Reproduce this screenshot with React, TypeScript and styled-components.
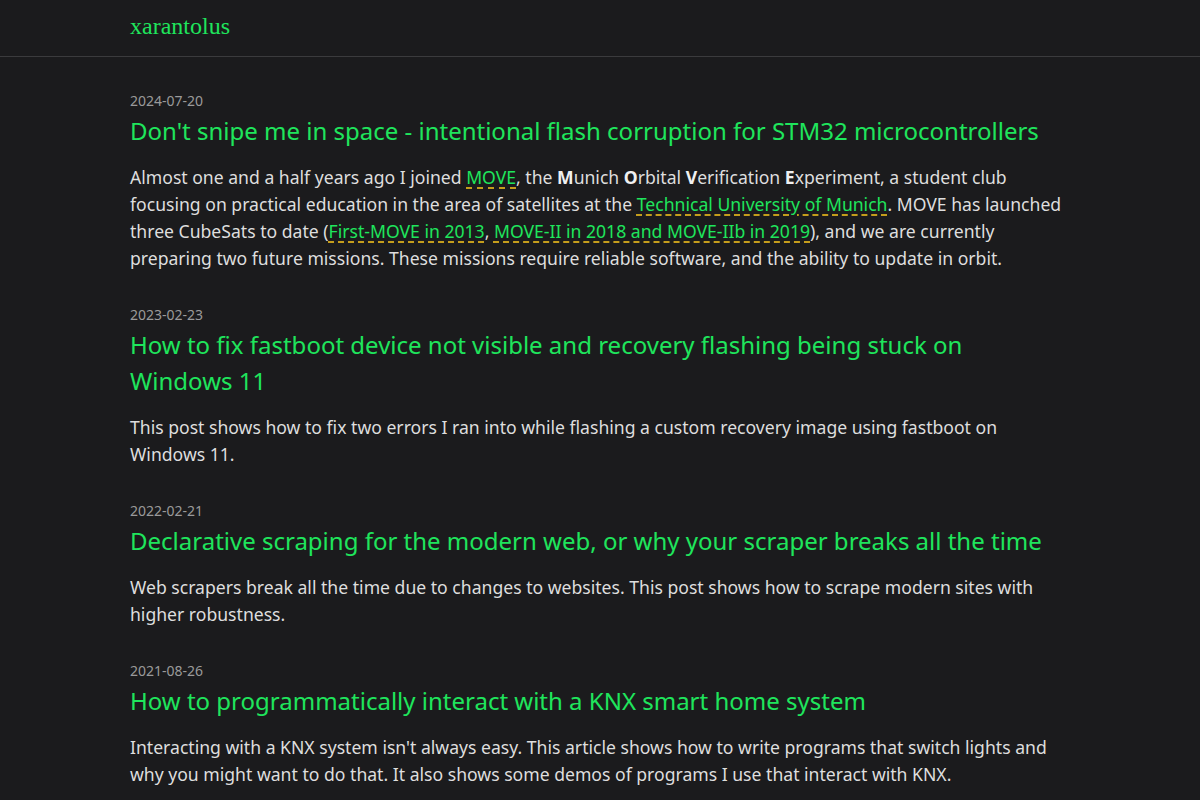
import React from "react";
import styled, { createGlobalStyle } from "styled-components";

const GlobalStyle = createGlobalStyle`
  html, body {
    margin: 0;
    padding: 0;
    background: #1b1b1d;
  }
  body {
    font-family: "Noto Sans", "Open Sans", sans-serif;
    color: #dedede;
  }
`;

const Header = styled.header`
  height: 56px;
  border-bottom: 1px solid #3b3b3d;
  display: flex;
  align-items: center;
  padding-left: 130px;
`;

const Logo = styled.a`
  font-family: "Liberation Serif", "DejaVu Serif", serif;
  font-size: 24px;
  color: #1fe55c;
  text-decoration: none;
  margin-top: -3px;
`;

const Main = styled.main`
  width: 940px;
  padding: 34px 0 0 130px;
  display: flex;
  flex-direction: column;
  gap: 33px;
`;

const Post = styled.article`
  display: flex;
  flex-direction: column;
`;

const DateLine = styled.time`
  font-size: 14px;
  line-height: 20px;
  color: #9a9a9a;
`;

const Title = styled.a`
  font-size: 24px;
  line-height: 36px;
  color: #1fe55c;
  text-decoration: none;
  margin-top: 2px;
`;

const Summary = styled.p`
  margin: 15px 0 0;
  font-size: 17.6px;
  line-height: 27px;
  color: #dedede;
`;

const Link = styled.a`
  color: #1fe55c;
  text-decoration: underline dashed #c49d1c;
  text-underline-offset: 3px;
  text-decoration-thickness: 2px;
`;

const B = styled.b`
  font-weight: 700;
  color: #f0f0f0;
`;

export default function App() {
  return (
    <>
      <GlobalStyle />
      <Header>
        <Logo href="#">xarantolus</Logo>
      </Header>
      <Main>
        <Post>
          <DateLine>2024-07-20</DateLine>
          <Title href="#">Don't snipe me in space - intentional flash corruption for STM32 microcontrollers</Title>
          <Summary>
            Almost one and a half years ago I joined <Link href="#">MOVE</Link>, the <B>M</B>unich <B>O</B>rbital{" "}
            <B>V</B>erification <B>E</B>xperiment, a student club focusing on practical education in the area of
            satellites at the <Link href="#">Technical University of Munich</Link>. MOVE has launched three CubeSats to
            date (<Link href="#">First-MOVE in 2013</Link>, <Link href="#">MOVE-II in 2018 and MOVE-IIb in 2019</Link>),
            and we are currently preparing two future missions. These missions require reliable software, and the
            ability to update in orbit.
          </Summary>
        </Post>
        <Post>
          <DateLine>2023-02-23</DateLine>
          <Title href="#">How to fix fastboot device not visible and recovery flashing being stuck on Windows 11</Title>
          <Summary>
            This post shows how to fix two errors I ran into while flashing a custom recovery image using fastboot on
            Windows 11.
          </Summary>
        </Post>
        <Post>
          <DateLine>2022-02-21</DateLine>
          <Title href="#">Declarative scraping for the modern web, or why your scraper breaks all the time</Title>
          <Summary>
            Web scrapers break all the time due to changes to websites. This post shows how to scrape modern sites with
            higher robustness.
          </Summary>
        </Post>
        <Post>
          <DateLine>2021-08-26</DateLine>
          <Title href="#">How to programmatically interact with a KNX smart home system</Title>
          <Summary>
            Interacting with a KNX system isn't always easy. This article shows how to write programs that switch
            lights and why you might want to do that. It also shows some demos of programs I use that interact with KNX.
          </Summary>
        </Post>
      </Main>
    </>
  );
}
